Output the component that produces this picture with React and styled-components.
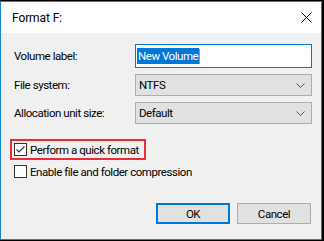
import React from "react";
import styled, { createGlobalStyle } from "styled-components";

const GlobalStyle = createGlobalStyle`
  body {
    margin: 0;
    background-color: #000;
    font-family: Roboto, "Liberation Sans", sans-serif;
    font-size: 11.5px;
    letter-spacing: -0.45px;
    color: #000;
  }
`;

const Window = styled.div`
  width: 322px;
  height: 239px;
  margin-top: 1px;
  box-sizing: border-box;
  border: 1px solid #1883d7;
  background-color: #f0f0f0;
  display: flex;
  flex-direction: column;
`;

const TitleBar = styled.div`
  height: 31px;
  background-color: #fff;
  display: flex;
  justify-content: space-between;
  align-items: center;
  padding: 0 9px 0 11px;
`;

const Title = styled.span`
  font-size: 12px;
  letter-spacing: -0.1px;
`;

const Body = styled.div`
  flex: 1;
  padding: 11px 9px 0 13px;
  display: flex;
  flex-direction: column;
`;

const Form = styled.div`
  display: grid;
  grid-template-columns: 121px 177px;
  row-gap: 6px;
  align-items: center;
`;

const Label = styled.span``;

const TextBox = styled.div`
  height: 24px;
  box-sizing: border-box;
  border: 1px solid #0078d7;
  background-color: #fff;
  display: flex;
  align-items: center;
  padding-left: 1px;
`;

const Selected = styled.span`
  background-color: #0078d7;
  color: #fff;
  padding: 1px 1px;
  line-height: 14px;
`;

const Caret = styled.span`
  width: 1px;
  height: 15px;
  background-color: #e8892c;
`;

const Select = styled.div`
  height: 22px;
  box-sizing: border-box;
  border: 1px solid #adadad;
  background-color: #e1e1e1;
  display: flex;
  align-items: center;
  justify-content: space-between;
  padding: 0 6px 0 3px;
`;

const Options = styled.div`
  margin-top: 15px;
  display: flex;
  flex-direction: column;
  align-items: flex-start;
`;

const Highlight = styled.div`
  margin-left: -4px;
  border: 2px solid #ec2d37;
  padding: 2px 5px 2px 2px;
`;

const CheckRow = styled.label`
  display: flex;
  align-items: center;
  gap: 3px;
  height: 13px;
  margin-top: ${(p) => (p.$spaced ? "5px" : "0")};
`;

const Box = styled.span`
  width: 13px;
  height: 13px;
  box-sizing: border-box;
  border: 1px solid #333;
  background-color: #fff;
  display: flex;
  align-items: center;
  justify-content: center;
`;

const Buttons = styled.div`
  margin-top: 25px;
  display: flex;
  justify-content: flex-end;
  gap: 7px;
  padding-right: 1px;
`;

const Button = styled.div`
  width: 74px;
  height: 21px;
  box-sizing: border-box;
  border: ${(p) => (p.$default ? "2px solid #0078d7" : "1px solid #adadad")};
  background-color: #e1e1e1;
  display: flex;
  align-items: center;
  justify-content: center;
`;

function Chevron() {
  return (
    <svg width="9" height="5" viewBox="0 0 9 5">
      <path d="M0.5 0.5 L4.5 4.5 L8.5 0.5" fill="none" stroke="#555" strokeWidth="1" />
    </svg>
  );
}

function Checkbox({ checked }) {
  return (
    <Box>
      {checked && (
        <svg width="11" height="11" viewBox="0 0 11 11">
          <path d="M1.5 5.5 L4 8 L9.5 2.5" fill="none" stroke="#333" strokeWidth="1.1" />
        </svg>
      )}
    </Box>
  );
}

export default function App() {
  return (
    <>
      <GlobalStyle />
      <Window>
        <TitleBar>
          <Title>Format F:</Title>
          <svg width="11" height="11" viewBox="0 0 11 11">
            <path d="M0.5 0.5 L10.5 10.5 M10.5 0.5 L0.5 10.5" stroke="#000" strokeWidth="1" />
          </svg>
        </TitleBar>
        <Body>
          <Form>
            <Label>Volume label:</Label>
            <TextBox>
              <Selected>New Volume</Selected>
              <Caret />
            </TextBox>
            <Label>File system:</Label>
            <Select>
              <span>NTFS</span>
              <Chevron />
            </Select>
            <Label>Allocation unit size:</Label>
            <Select>
              <span>Default</span>
              <Chevron />
            </Select>
          </Form>
          <Options>
            <Highlight>
              <CheckRow>
                <Checkbox checked />
                <span>Perform a quick format</span>
              </CheckRow>
            </Highlight>
            <CheckRow $spaced>
              <Checkbox />
              <span>Enable file and folder compression</span>
            </CheckRow>
          </Options>
          <Buttons>
            <Button $default>OK</Button>
            <Button>Cancel</Button>
          </Buttons>
        </Body>
      </Window>
    </>
  );
}
